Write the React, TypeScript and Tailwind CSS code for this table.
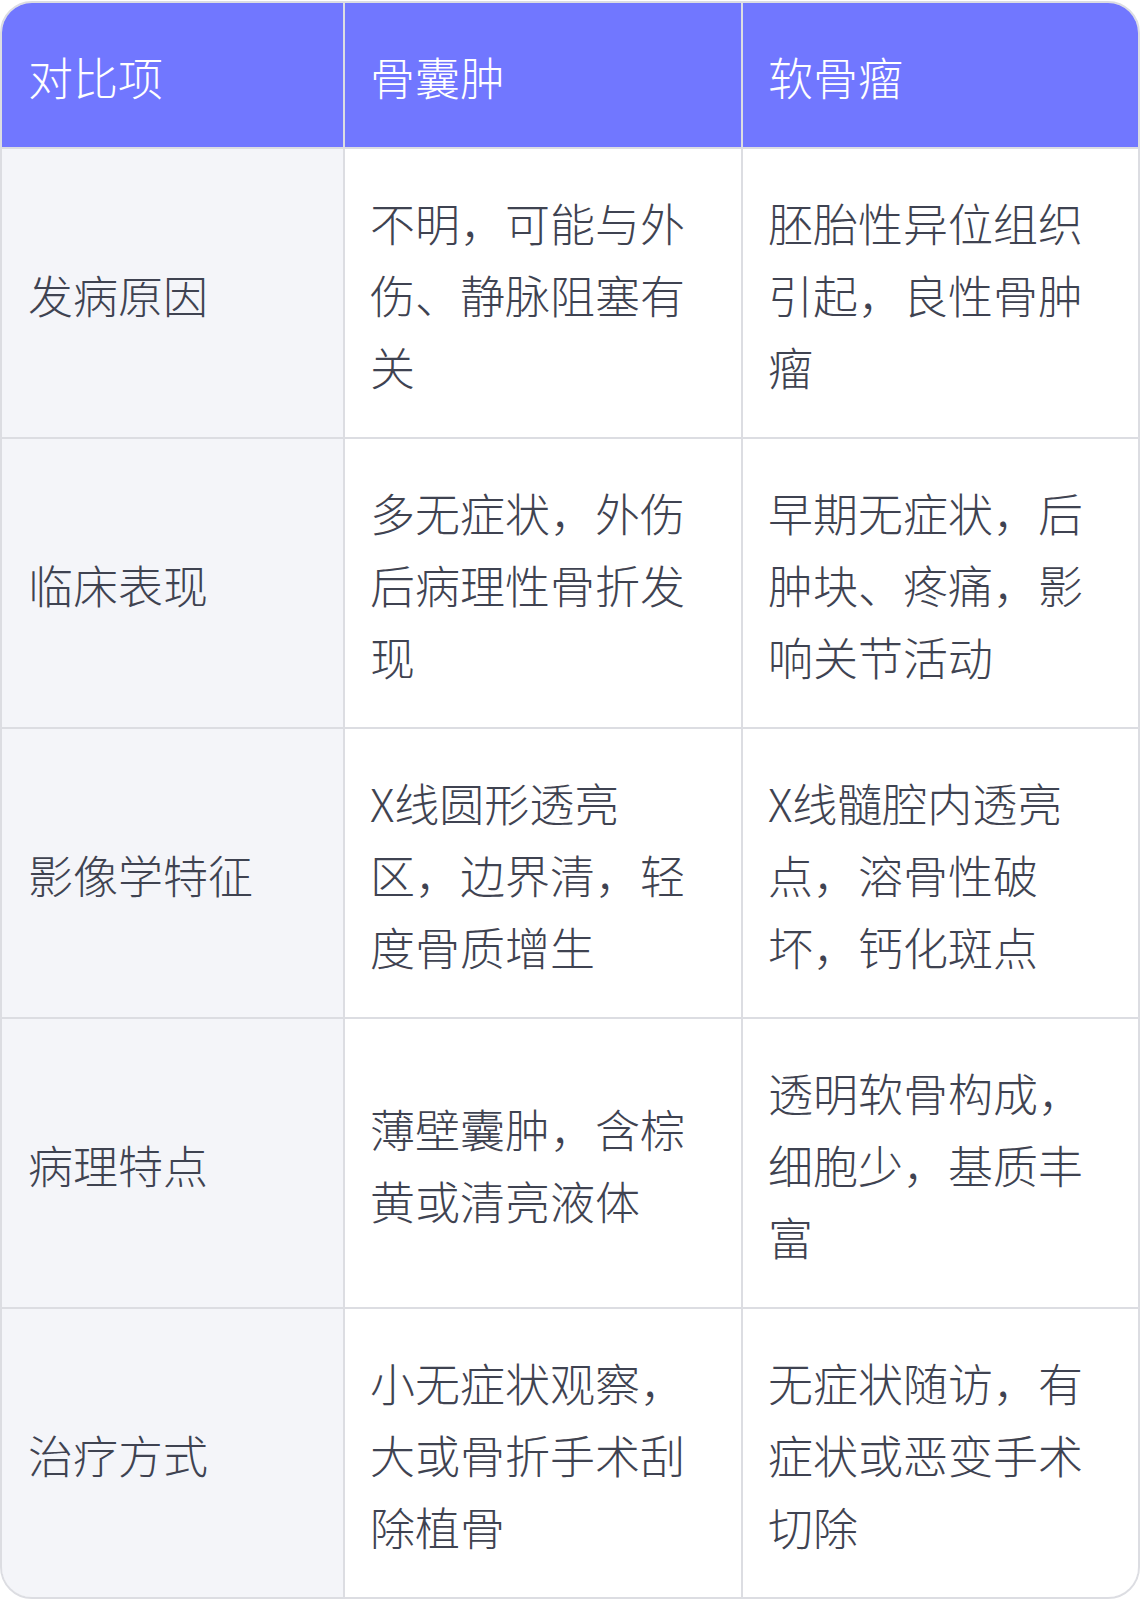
const rows = [
	{
		item: "发病原因",
		cyst: "不明，可能与外伤、静脉阻塞有关",
		chondroma: "胚胎性异位组织引起，良性骨肿瘤",
	},
	{
		item: "临床表现",
		cyst: "多无症状，外伤后病理性骨折发现",
		chondroma: "早期无症状，后肿块、疼痛，影响关节活动",
	},
	{
		item: "影像学特征",
		cyst: "X线圆形透亮区，边界清，轻度骨质增生",
		chondroma: "X线髓腔内透亮点，溶骨性破坏，钙化斑点",
	},
	{
		item: "病理特点",
		cyst: "薄壁囊肿，含棕黄或清亮液体",
		chondroma: "透明软骨构成，细胞少，基质丰富",
	},
	{
		item: "治疗方式",
		cyst: "小无症状观察，大或骨折手术刮除植骨",
		chondroma: "无症状随访，有症状或恶变手术切除",
	},
];

export default function App() {
	return (
		<div
			className="w-[1140px] bg-white"
			style={{
				fontFamily:
					'"Noto Sans CJK SC Light", "Noto Sans CJK SC DemiLight", "Noto Sans CJK SC", "Noto Sans", sans-serif',
			}}
		>
			<div className="mt-px overflow-hidden rounded-[32px] border-2 border-[#dcdde2]">
				<div className="grid grid-cols-[341px_396px_395px] gap-[2px] bg-[#dcdde2] text-[45px] font-light leading-[72px]">
					{/* header */}
					<div className="flex items-center bg-[#7177ff] pb-[34px] pl-[26px] pr-10 pt-[38px] text-white">
						对比项
					</div>
					<div className="flex items-center bg-[#7177ff] pb-[34px] pl-[25px] pr-10 pt-[38px] text-white">
						骨囊肿
					</div>
					<div className="flex items-center bg-[#7177ff] pb-[34px] pl-[25px] pr-10 pt-[38px] text-white">
						软骨瘤
					</div>

					{rows.map((row) => (
						<div key={row.item} className="contents">
							<div className="flex min-h-[288px] items-center bg-[#f4f5f9] pb-[34px] pl-[26px] pr-10 pt-[38px] text-[#3f4351]">
								{row.item}
							</div>
							<div className="flex min-h-[288px] items-center bg-white pb-[34px] pl-[25px] pr-10 pt-[38px] text-[#3f4351]">
								<p>{row.cyst}</p>
							</div>
							<div className="flex min-h-[288px] items-center bg-white pb-[34px] pl-[25px] pr-10 pt-[38px] text-[#3f4351]">
								<p>{row.chondroma}</p>
							</div>
						</div>
					))}
				</div>
			</div>
		</div>
	);
}
